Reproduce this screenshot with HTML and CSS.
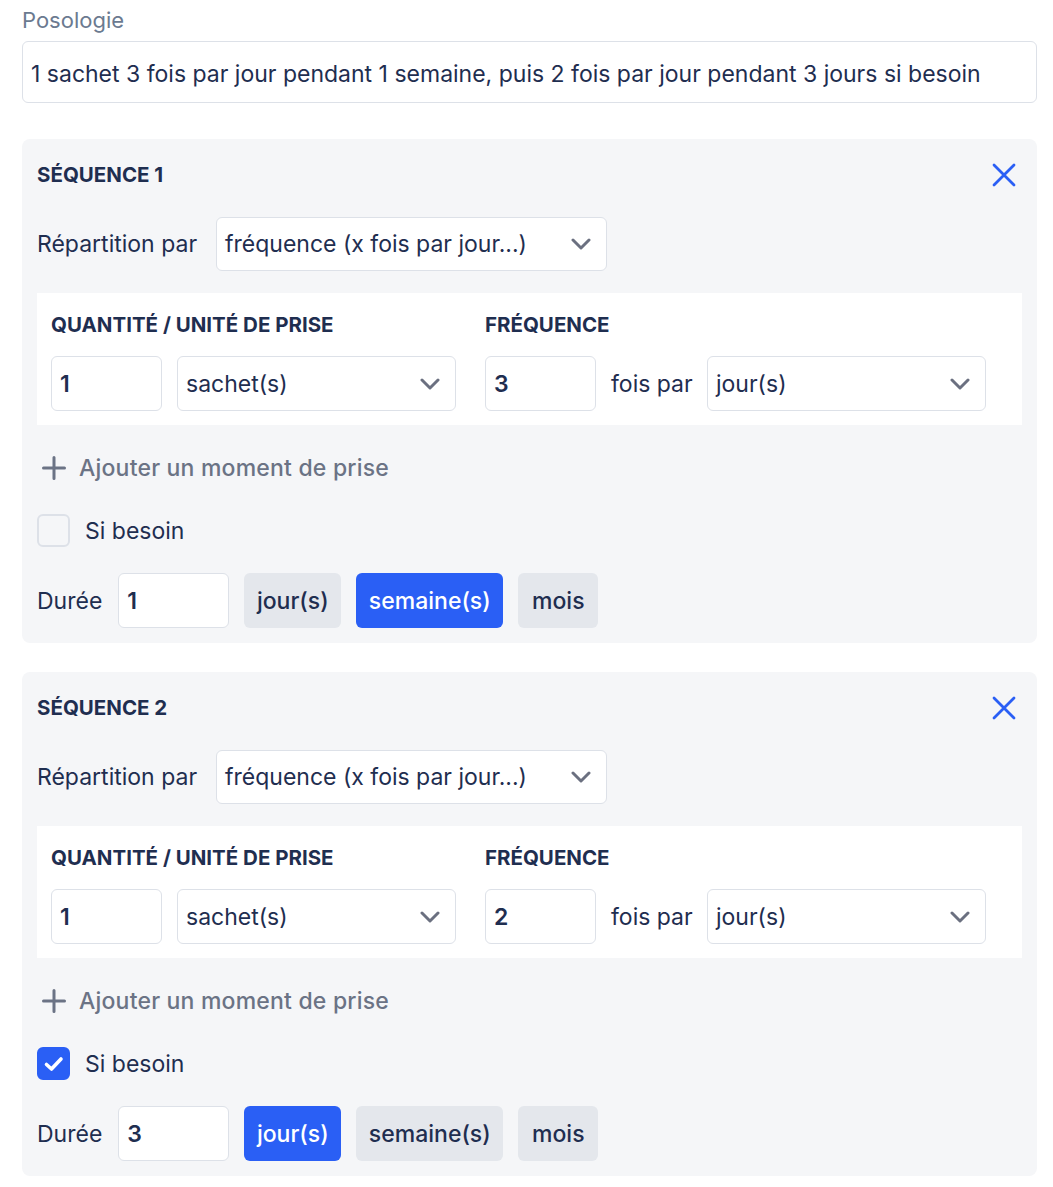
FILE: index.html
```html
<!DOCTYPE html>
<html lang="fr">
<head>
<meta charset="utf-8">
<link rel="stylesheet" href="styles.css">
</head>
<body>
<div class="page">
  <div class="label">Posologie</div>
  <div class="textbox">1 sachet 3 fois par jour pendant 1 semaine, puis 2 fois par jour pendant 3 jours si besoin</div>

  <section class="card">
    <div class="card-head">
      <h2 class="card-title">SÉQUENCE 1</h2>
      <svg class="close" viewBox="0 0 24 24" width="24" height="24"><path d="M2 2 L22 22 M22 2 L2 22" stroke="#2a5ff5" stroke-width="2.8" stroke-linecap="round" fill="none"/></svg>
    </div>
    <div class="row-rep">
      <span class="txt rep-label">Répartition par</span>
      <div class="select sel-rep"><span>fréquence (x fois par jour...)</span><svg class="chev" viewBox="0 0 20 12" width="20" height="12"><path d="M2 2 L10 10 L18 2" stroke="#6b7080" stroke-width="3" fill="none" stroke-linecap="round" stroke-linejoin="round"/></svg></div>
    </div>
    <div class="panel">
      <div class="col col-q">
        <div class="col-title">QUANTITÉ / UNITÉ DE PRISE</div>
        <div class="col-row">
          <div class="input num">1</div>
          <div class="select sel-unit"><span>sachet(s)</span><svg class="chev" viewBox="0 0 20 12" width="20" height="12"><path d="M2 2 L10 10 L18 2" stroke="#6b7080" stroke-width="3" fill="none" stroke-linecap="round" stroke-linejoin="round"/></svg></div>
        </div>
      </div>
      <div class="col col-f">
        <div class="col-title">FRÉQUENCE</div>
        <div class="col-row">
          <div class="input num">3</div>
          <span class="txt fois">fois par</span>
          <div class="select sel-unit sel-jour"><span>jour(s)</span><svg class="chev" viewBox="0 0 20 12" width="20" height="12"><path d="M2 2 L10 10 L18 2" stroke="#6b7080" stroke-width="3" fill="none" stroke-linecap="round" stroke-linejoin="round"/></svg></div>
        </div>
      </div>
    </div>
    <div class="add"><svg viewBox="0 0 24 24" width="24" height="24"><path d="M12 1.5 V22.5 M1.5 12 H22.5" stroke="#6b7385" stroke-width="3" stroke-linecap="round"/></svg><span>Ajouter un moment de prise</span></div>
    <label class="check"><span class="box"></span><span class="txt">Si besoin</span></label>
    <div class="duree">
      <span class="txt">Durée</span>
      <div class="input num">1</div>
      <span class="btn b-jour">jour(s)</span>
      <span class="btn b-sem active">semaine(s)</span>
      <span class="btn b-mois">mois</span>
    </div>
  </section>

  <section class="card">
    <div class="card-head">
      <h2 class="card-title">SÉQUENCE 2</h2>
      <svg class="close" viewBox="0 0 24 24" width="24" height="24"><path d="M2 2 L22 22 M22 2 L2 22" stroke="#2a5ff5" stroke-width="2.8" stroke-linecap="round" fill="none"/></svg>
    </div>
    <div class="row-rep">
      <span class="txt rep-label">Répartition par</span>
      <div class="select sel-rep"><span>fréquence (x fois par jour...)</span><svg class="chev" viewBox="0 0 20 12" width="20" height="12"><path d="M2 2 L10 10 L18 2" stroke="#6b7080" stroke-width="3" fill="none" stroke-linecap="round" stroke-linejoin="round"/></svg></div>
    </div>
    <div class="panel">
      <div class="col col-q">
        <div class="col-title">QUANTITÉ / UNITÉ DE PRISE</div>
        <div class="col-row">
          <div class="input num">1</div>
          <div class="select sel-unit"><span>sachet(s)</span><svg class="chev" viewBox="0 0 20 12" width="20" height="12"><path d="M2 2 L10 10 L18 2" stroke="#6b7080" stroke-width="3" fill="none" stroke-linecap="round" stroke-linejoin="round"/></svg></div>
        </div>
      </div>
      <div class="col col-f">
        <div class="col-title">FRÉQUENCE</div>
        <div class="col-row">
          <div class="input num">2</div>
          <span class="txt fois">fois par</span>
          <div class="select sel-unit sel-jour"><span>jour(s)</span><svg class="chev" viewBox="0 0 20 12" width="20" height="12"><path d="M2 2 L10 10 L18 2" stroke="#6b7080" stroke-width="3" fill="none" stroke-linecap="round" stroke-linejoin="round"/></svg></div>
        </div>
      </div>
    </div>
    <div class="add"><svg viewBox="0 0 24 24" width="24" height="24"><path d="M12 1.5 V22.5 M1.5 12 H22.5" stroke="#6b7385" stroke-width="3" stroke-linecap="round"/></svg><span>Ajouter un moment de prise</span></div>
    <label class="check"><span class="box checked"><svg viewBox="0 0 24 24" width="24" height="24"><path d="M4.5 12.5 L9.5 17 L19 7" stroke="#fff" stroke-width="3.6" fill="none" stroke-linecap="round" stroke-linejoin="round"/></svg></span><span class="txt">Si besoin</span></label>
    <div class="duree">
      <span class="txt">Durée</span>
      <div class="input num">3</div>
      <span class="btn b-jour active">jour(s)</span>
      <span class="btn b-sem">semaine(s)</span>
      <span class="btn b-mois">mois</span>
    </div>
  </section>
</div>
</body>
</html>
```

FILE: styles.css
```css
* { box-sizing: border-box; }
body {
  margin: 0;
  background: #fff;
  font-family: "Inter", "Noto Sans", sans-serif;
  color: #1f2e50;
  font-size: 23px;
}
.page {
  padding: 8px 16px 0 22px;
}
.label {
  color: #6b7a90;
  line-height: 24px;
  height: 24px;
  font-size: 22px;
}
.textbox {
  margin-top: 9px;
  height: 62px;
  border: 1px solid #dde1e8;
  border-radius: 6px;
  padding: 3px 8px 0 8px;
  display: flex;
  align-items: center;
  white-space: nowrap;
}
.card {
  margin-top: 36px;
  background: #f5f6f8;
  border-radius: 8px;
  padding: 24px 15px 15px 15px;
}
.card + .card { margin-top: 29px; }
.card-head {
  display: flex;
  justify-content: space-between;
  align-items: center;
  height: 24px;
}
.card-title {
  margin: 0;
  font-size: 20.5px;
  font-weight: 700;
  line-height: 24px;
}
.close { margin-right: 6px; }
.row-rep {
  margin-top: 30px;
  display: flex;
  align-items: center;
}
.rep-label { width: 179px; }
.select {
  background: #fff;
  border: 1px solid #dde1e8;
  border-radius: 6px;
  height: 54px;
  display: flex;
  align-items: center;
  justify-content: space-between;
  padding: 0 15px 0 8px;
}
.sel-rep { width: 391px; }
.panel {
  margin-top: 22px;
  background: #fff;
  padding: 22px 14px 14px 14px;
  display: flex;
}
.col-q { width: 434px; }
.col-title {
  font-size: 20.5px;
  font-weight: 700;
  line-height: 20px;
  height: 20px;
}
.col-row {
  margin-top: 21px;
  display: flex;
  align-items: center;
}
.input {
  background: #fff;
  border: 1px solid #dde1e8;
  border-radius: 6px;
  height: 55px;
  display: flex;
  align-items: center;
  padding: 0 8px;
}
.num { width: 111px; font-weight: 600; }
.sel-unit { width: 279px; height: 55px; margin-left: 15px; }
.fois { margin-left: 15px; width: 96px; }
.sel-jour { margin-left: 0; }
.add {
  margin-top: 31px;
  display: flex;
  align-items: center;
  gap: 13px;
  height: 24px;
  color: #6b7385;
  font-weight: 500;
  padding-left: 5px;
  letter-spacing: 0.2px;
}
.check {
  margin-top: 34px;
  display: flex;
  align-items: center;
  gap: 15px;
  height: 33px;
}
.box {
  width: 33px;
  height: 33px;
  border: 2px solid #dde1e8;
  border-radius: 6px;
  background: #f5f6f8;
  display: flex;
  align-items: center;
  justify-content: center;
}
.box.checked {
  background: #2a5ff5;
  border-color: #2a5ff5;
}
.duree {
  margin-top: 26px;
  display: flex;
  align-items: center;
  gap: 15px;
  height: 55px;
}
.duree .input { margin-left: 1px; }
.btn {
  height: 55px;
  display: flex;
  align-items: center;
  justify-content: center;
  background: #e4e7ec;
  border-radius: 6px;
  font-weight: 500;
  white-space: nowrap;
}
.b-jour { width: 97px; }
.b-sem { width: 147px; }
.b-mois { width: 80px; }
.btn.active {
  background: #2a5ff5;
  color: #fff;
}
```
